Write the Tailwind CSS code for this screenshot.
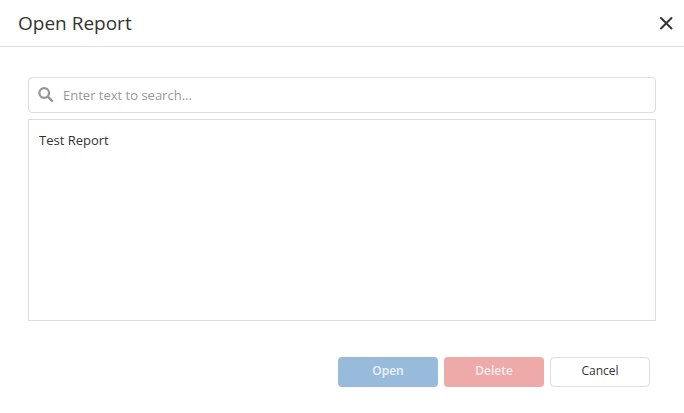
<!DOCTYPE html>
<html lang="en">
<head>
<meta charset="utf-8">
<title>Open Report</title>
<script src="https://cdn.jsdelivr.net/npm/@tailwindcss/browser@4"></script>
</head>
<body class="bg-white font-['Open_Sans','Noto_Sans',sans-serif] text-[#333333]">
<div role="dialog" aria-labelledby="title" class="flex min-h-screen flex-col">
  <header class="flex items-center justify-between border-b border-[#dddddd] pt-2 pr-2 pb-2 pl-[18px]">
    <h1 id="title" class="text-[19px] leading-[30px]">Open Report</h1>
    <button type="button" aria-label="Close" class="flex size-5 items-center justify-center">
      <svg class="size-3.5" viewBox="0 0 14 14" fill="none" stroke="#333333" stroke-width="2" stroke-linecap="round"><path d="M2 2l10.500 10.500M12.500 2L2 12.500"/></svg>
    </button>
  </header>
  <main class="flex flex-1 flex-col gap-1.5 px-7 pt-[30px]">
    <label class="flex h-9 items-center gap-[9px] rounded border border-[#dddddd] pl-[9px]">
      <svg class="size-4 shrink-0" viewBox="0 0 16 16" fill="none" stroke="#959595" aria-hidden="true"><circle cx="6.200" cy="6" r="4.800" stroke-width="2.200"/><path d="M9.600 9.400l5.200 5.200" stroke-width="2.400"/></svg>
      <input type="text" aria-label="Search" placeholder="Enter text to search..." class="h-full min-w-0 flex-1 bg-transparent text-[13px] leading-5 outline-none placeholder:text-[#999999]">
    </label>
    <ul role="listbox" aria-label="Reports" class="min-h-[202px] flex-1 border border-[#dddddd] py-2.5 text-[13px] leading-5">
      <li role="option" class="px-2.5">Test Report</li>
    </ul>
  </main>
  <footer class="flex justify-end gap-1.5 px-[34px] pt-9 pb-[26px] text-[12px] leading-4">
    <button type="button" disabled class="h-[30px] w-[100px] rounded bg-[#99bbdb] pb-0.5 font-semibold text-white/80">Open</button>
    <button type="button" disabled class="h-[30px] w-[100px] rounded bg-[#eea9a9] pb-0.5 font-semibold text-white/80">Delete</button>
    <button type="button" class="h-[30px] w-[100px] rounded border border-[#dddddd] pb-0.5">Cancel</button>
  </footer>
</div>
</body>
</html>
